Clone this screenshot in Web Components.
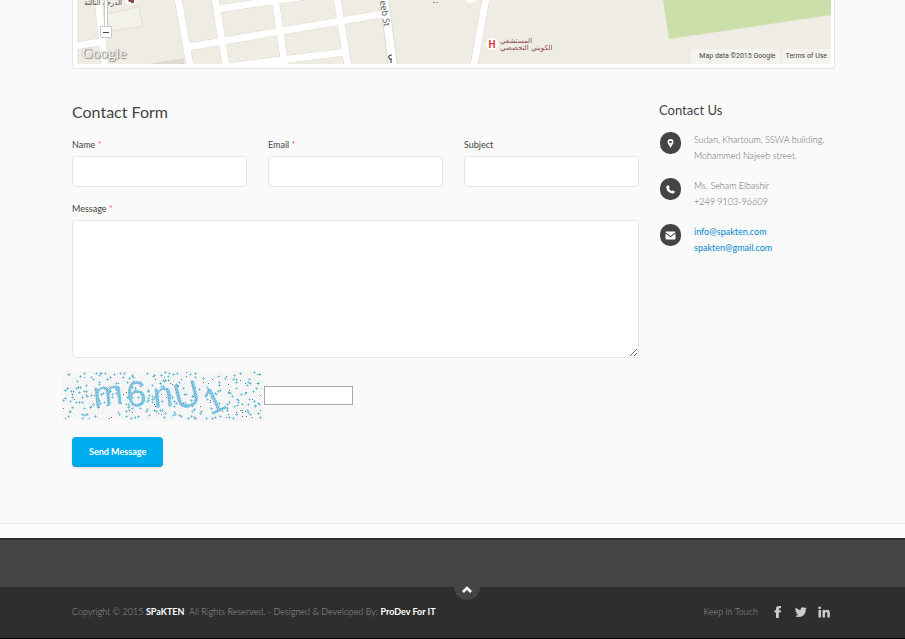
<!DOCTYPE html>
<html lang="en">
<head>
<meta charset="utf-8">
<title>SPaKTEN - Contact</title>
<style>
body { margin: 0; background: #fafafa; color: #444; font-family: Lato, "Liberation Sans", sans-serif; font-size: 9px; }
</style>
</head>
<body>
<contact-page></contact-page>
<script>
function define(name, html, setup) {
  const template = document.createElement('template');
  template.innerHTML = html;
  customElements.define(name, class extends HTMLElement {
    constructor() {
      super();
      this.attachShadow({ mode: 'open' }).append(template.content.cloneNode(true));
    }
    connectedCallback() { if (setup) setup(this, this.shadowRoot); }
  });
}

define('map-frame', `
<style>
:host { display: block; box-sizing: border-box; border: 1px solid #e5e5e5; border-top: 0; border-radius: 0 0 4px 4px; background: #fff; padding: 0 3px 4px 4px; }
.map { position: relative; height: 64px; overflow: hidden; background: #efece4; }
svg { display: block; width: 100%; height: 64px; }
.credits { position: absolute; right: 0; bottom: 0; display: flex; gap: 2px; font: 7px/15px Roboto, sans-serif; color: #444; }
.credits > * { background: #f4f3ef; padding: 0 4px; color: #444; text-decoration: none; }
.credits span { padding-left: 8px; }
.logo { position: absolute; left: 5px; bottom: 2px; font: 15px/17px "Liberation Serif", serif; color: #fff; text-shadow: 0 0 1px #777, 1px 1px 1px #777; }
.track { position: absolute; left: 27px; top: 0; width: 2px; height: 26px; background: #fff; border: 1px solid #ccc; border-width: 0 1px; }
button { position: absolute; left: 23px; top: 26px; width: 12px; height: 12px; padding: 0; border: 1px solid #ccc; border-radius: 1px; background: #fff; display: grid; place-items: center; }
button i { width: 6px; height: 1px; background: #444; }
</style>
<div class="map">
<svg viewBox="0 0 754 64" preserveAspectRatio="xMinYMax slice">
  <path fill="#f2f2e9" stroke="#e3e2d5" d="M30 14 62 7 66 26 33 31Z"/>
  <path fill="#dedad3" d="M72 64 107 58V64Z"/>
  <path fill="#cadfaa" d="M586 -1 592 39 754 15V-1Z"/>
  <g fill="none">
    <path stroke="#dedace" stroke-width="8" d="M21 -2 28 66M-2 46 23 42M101 -2 113 66M138 -2 149 66M198 -2 208 66M140 9 243 -6M111 47 305 14M150 67 269 52M260 -2 271 66M409 -2 397 66"/>
    <path stroke="#dedace" stroke-width="10" d="M307 -2 316 66"/>
    <path stroke="#fff" stroke-width="7" d="M21 -2 28 66M-2 46 23 42M101 -2 113 66M138 -2 149 66M198 -2 208 66M140 9 243 -6M111 47 305 14M150 67 269 52M260 -2 271 66M409 -2 397 66"/>
    <path stroke="#fff" stroke-width="8" d="M307 -2 316 66"/>
  </g>
  <circle cx="54" cy="-1" r="6" fill="#fff"/><path fill="#8d4a3d" d="M51 0h3v-2h3v5h-3v-1h-2z"/>
  <circle cx="394" cy="-3" r="6" fill="#fff"/>
  <path stroke="#999" d="M356 2.500h2M359 2.500h2"/>
  <text x="45" y="5" text-anchor="end" font-family="DejaVu Sans" font-size="7" fill="#444">الدرجة الثالثة</text>
  <text transform="translate(303 1) rotate(81)" font-family="Open Sans, sans-serif" font-size="9" fill="#555">eeb St</text>
  <path d="M315 55q-4 0-3 3 1 2 2 1v4" fill="none" stroke="#444" stroke-width="1.200"/>
  <circle cx="415" cy="44" r="6" fill="#fff"/>
  <text x="415" y="48" text-anchor="middle" font-family="Roboto" font-size="10" font-weight="700" fill="#e23b35">H</text>
  <g font-family="DejaVu Sans" font-size="7" fill="#8b4a4c"><text x="423" y="43">المستشفي</text><text x="423" y="50">الكويتي التخصصي</text></g>
</svg>
<div class="track"></div><button aria-label="Zoom out"><i></i></button>
<div class="logo">Google</div>
<div class="credits"><span>Map data ©2015 Google</span><a href="#terms">Terms of Use</a></div>
</div>`);

define('form-field', `
<style>
:host { display: block; min-width: 0; }
label { display: block; font-size: 9px; line-height: 12px; margin-bottom: 5px; color: #444; }
em { font-style: normal; color: #f66; }
input, textarea { display: block; width: 100%; box-sizing: border-box; border: 1px solid #e6e6e6; border-radius: 4px; background: #fff; padding: 6px 8px; font: inherit; color: #444; outline: 0; }
input { height: 31px; }
textarea { height: 138px; resize: vertical; }
</style>
<label for="control"><slot></slot> <em></em></label>`, (host, root) => {
  const control = document.createElement(host.hasAttribute('multiline') ? 'textarea' : 'input');
  control.id = 'control';
  if (host.hasAttribute('required')) { control.required = true; root.querySelector('em').textContent = '*'; }
  control.setAttribute('aria-label', host.textContent);
  root.append(control);
});

define('captcha-image', `
<style>:host { display: block; } svg { display: block; overflow: visible; }</style>
<svg width="201" height="50" viewBox="0 0 201 50" role="img" aria-label="Security code">
  <defs>
    <pattern id="weave" width="2" height="2" patternUnits="userSpaceOnUse"><rect width="2" height="2" fill="#fff"/><path fill="#eee" d="M0 0h1v1H0zM1 1h1v1H1z"/></pattern>
    <pattern id="ink" width="3" height="3" patternUnits="userSpaceOnUse"><rect width="3" height="3" fill="#8ccbe5"/><path fill="#4b9fc6" d="M0 0h1v1H0zM2 1h1v1H2z"/></pattern>
  </defs>
  <rect width="201" height="50" fill="url(#weave)"/>
  <g id="dots"></g>
  <g font-family="Liberation Sans, sans-serif" font-size="36" fill="url(#ink)">
    <text transform="translate(32 36) rotate(-6)">m</text>
    <text transform="translate(65 36) rotate(-4)">6</text>
    <text transform="translate(92 37) rotate(-6)">n</text>
    <text transform="translate(115 39) rotate(-14)">U</text>
    <text transform="translate(148 45) rotate(-25)">1</text>
  </g>
</svg>`, (host, root) => {
  let seed = 73;
  const next = () => (seed = (seed * 16807) % 2147483647) / 2147483647;
  const paths = ['', '', '', ''];
  for (let i = 0; i < 330; i++) {
    const x = Math.floor(next() * 198) + 1, y = Math.floor(next() * 47) + 1, k = Math.floor(next() * 4);
    if (k < 3) paths[0] += `M${x - 1} ${y}h1v-1h1v1h1v1h-1v1h-1v-1h-1z`;
    paths[k === 3 ? 3 : k === 2 ? 2 : 1] += `M${x} ${y}h1v1h-1z`;
  }
  root.querySelector('#dots').innerHTML = ['#9bd3e8', '#6dbbd7', '#4aa4c4', '#3f7f95'].map((c, i) => `<path fill="${c}" d="${paths[i]}"/>`).join('');
});

define('contact-form', `
<style>
:host { display: block; }
h2 { margin: 0 0 16px; font-size: 16px; line-height: 22px; font-weight: 400; color: #444; }
.row { display: grid; grid-template-columns: repeat(3, 1fr); gap: 21px; margin-bottom: 16px; }
.check { display: flex; align-items: center; gap: 1px; margin: 13px 0 16px -10px; }
.check input { box-sizing: border-box; width: 89px; height: 19px; border: 1px solid #a9a9a9; background: #fff; padding: 1px; margin-bottom: 2px; }
button { display: block; height: 30px; padding: 2px 17px 0; border: 0; border-bottom: 3px solid #00a2e2; border-radius: 4px; background: #00aeef; color: #fff; font: 700 9px/25px Lato, sans-serif; box-shadow: 0 1px 2px #0002; }
</style>
<h2>Contact Form</h2>
<form>
<div class="row"><form-field required>Name</form-field><form-field required>Email</form-field><form-field>Subject</form-field></div>
<form-field required multiline>Message</form-field>
<div class="check"><captcha-image></captcha-image><input aria-label="Security code"></div>
<button type="submit">Send Message</button>
</form>`);

define('contact-item', `
<style>
:host { display: grid; grid-template-columns: 21px 1fr; gap: 13px; font-size: 9px; line-height: 16px; font-weight: 300; color: #666; }
.icon { width: 21px; height: 22px; border-radius: 10px; background: #444; display: grid; place-items: center; }
svg { width: 11px; height: 11px; fill: #fff; }
</style>
<span class="icon"><svg viewBox="0 0 11 11"><path/></svg></span><div><slot></slot></div>`, (host, root) => {
  const shapes = {
    pin: 'M5.500 1A3 3 0 0 0 2.500 4C2.500 6 4.500 7.500 5.500 10 6.500 7.500 8.500 6 8.500 4A3 3 0 0 0 5.500 1ZM5.500 2.700A1.300 1.300 0 1 1 5.500 5.300 1.300 1.300 0 0 1 5.500 2.700Z',
    phone: 'M1.500 2.300 3 1.200Q3.500 1 3.800 1.500L4.600 3.200Q4.800 3.600 4.400 3.900L3.900 4.400Q4.800 6.300 6.700 7.100L7.300 6.500Q7.600 6.200 8 6.400L9.600 7.200Q10 7.500 9.800 8 9 9.800 7.300 9.500 2 8.500 1.300 3.700 1.200 2.800 1.500 2.300Z',
    mail: 'M.500 2.300Q.500 1.500 1.500 1.500H9.500Q10.500 1.500 10.500 2.300L5.500 6ZM.500 3.500 5.500 7.200 10.500 3.500V8.500Q10.500 9.500 9.500 9.500H1.500Q.500 9.500.500 8.500Z'
  };
  const path = root.querySelector('path');
  path.setAttribute('d', shapes[host.getAttribute('icon')]);
  path.setAttribute('fill-rule', 'evenodd');
});

define('contact-details', `
<style>
:host { display: block; }
h3 { margin: 0 0 13px; font-size: 13px; line-height: 18px; font-weight: 400; color: #444; }
.list { display: grid; gap: 14px; padding-left: 1px; }
a { color: #0088cc; font-weight: 400; text-decoration: none; }
</style>
<h3>Contact Us</h3>
<div class="list">
<contact-item icon="pin">Sudan, Khartoum, SSWA building,<br>Mohammed Najeeb street.</contact-item>
<contact-item icon="phone">Ms. Seham Elbashir<br>+249 9103-96609</contact-item>
<contact-item icon="mail"><a href="mailto:info@spakten.com">info@spakten.com</a><br><a href="mailto:spakten@gmail.com">spakten@gmail.com</a></contact-item>
</div>`);

define('page-footer', `
<style>
:host { display: block; border-top: 2px solid #2e2e2e; background: #454545; }
.band { height: 47px; }
.bar { position: relative; box-sizing: border-box; min-height: 52px; background: #2e2e2e; border-bottom: 1px solid #08080a; font-size: 9px; line-height: 12px; font-weight: 300; color: #999; }
.inner { box-sizing: border-box; max-width: 905px; margin: auto; padding: 18px 74px 0 72px; display: flex; justify-content: space-between; align-items: center; }
.inner > p { margin: 0; white-space: pre; }
p a { color: #fff; font-weight: 700; text-decoration: none; }
nav { display: flex; gap: 9px; align-items: center; }
nav span { padding-right: 4px; }
nav a { width: 14px; height: 14px; }
svg { display: block; fill: #ccc; }
.top { position: absolute; left: 50%; top: -13px; margin-left: 1px; width: 26px; height: 26px; border-radius: 50%; background: #454545; display: grid; place-items: center; }
</style>
<div class="band"></div>
<div class="bar">
<a class="top" href="#top" aria-label="Back to top"><svg width="12" height="12" viewBox="0 0 12 12"><path d="M2 11 6 7 10 11" fill="none" stroke="#fff" stroke-width="2.600"/></svg></a>
<div class="inner">
<p>Copyright © 2015 <a href="#spakten">SPaKTEN</a>  All Rights Reserved. - Designed &amp; Developed By: <a href="#prodev">ProDev For IT</a></p>
<nav><span>Keep in Touch</span>
<a href="#facebook" aria-label="Facebook"><svg width="14" height="14" viewBox="0 0 14 14"><path d="M5 13V7.500H3.500V5.300H5V3.800Q5 1 7.800 1H10V3.300H8.600Q7.800 3.300 7.800 4.200V5.300H10L9.700 7.500H7.800V13Z"/></svg></a>
<a href="#twitter" aria-label="Twitter"><svg width="14" height="14" viewBox="0 0 14 14"><path d="M13 3.300 11.700 4.500C11.900 9 8.800 12 4.900 12Q2.600 12 1 10.900 3.100 11 4.500 9.800 2.800 9.600 2.200 8.100H3.200Q1.300 7.300 1.200 5.500L2.300 5.800Q.700 4.500 1.600 2.600 3.700 5 6.600 5.200C6.200 2.600 8.900 1.200 10.700 2.900L12.400 2.300 11.500 3.600Z"/></svg></a>
<a href="#linkedin" aria-label="LinkedIn"><svg width="14" height="14" viewBox="0 0 14 14"><path d="M1.500 5H4V12.500H1.500ZM5.500 5H8V6Q8.700 4.800 10.200 4.800 12.800 4.800 12.800 8V12.500H10.300V8.300Q10.300 6.900 9.300 6.900 8 6.900 8 8.400V12.500H5.500Z"/><circle cx="2.700" cy="2.800" r="1.400"/></svg></a>
</nav>
</div>
</div>`);

define('contact-page', `
<style>
:host { display: block; }
main { box-sizing: border-box; max-width: 905px; margin: auto; padding: 0 70px 56px 72px; }
.columns { display: grid; grid-template-columns: 1fr 176px; gap: 20px; margin-top: 32px; align-items: start; }
.rule { height: 14px; border-top: 1px solid #e6e6e6; background: #fcfcfc; }
</style>
<main>
<map-frame></map-frame>
<div class="columns"><contact-form></contact-form><contact-details></contact-details></div>
</main>
<div class="rule"></div>
<page-footer></page-footer>`);
</script>
</body>
</html>
